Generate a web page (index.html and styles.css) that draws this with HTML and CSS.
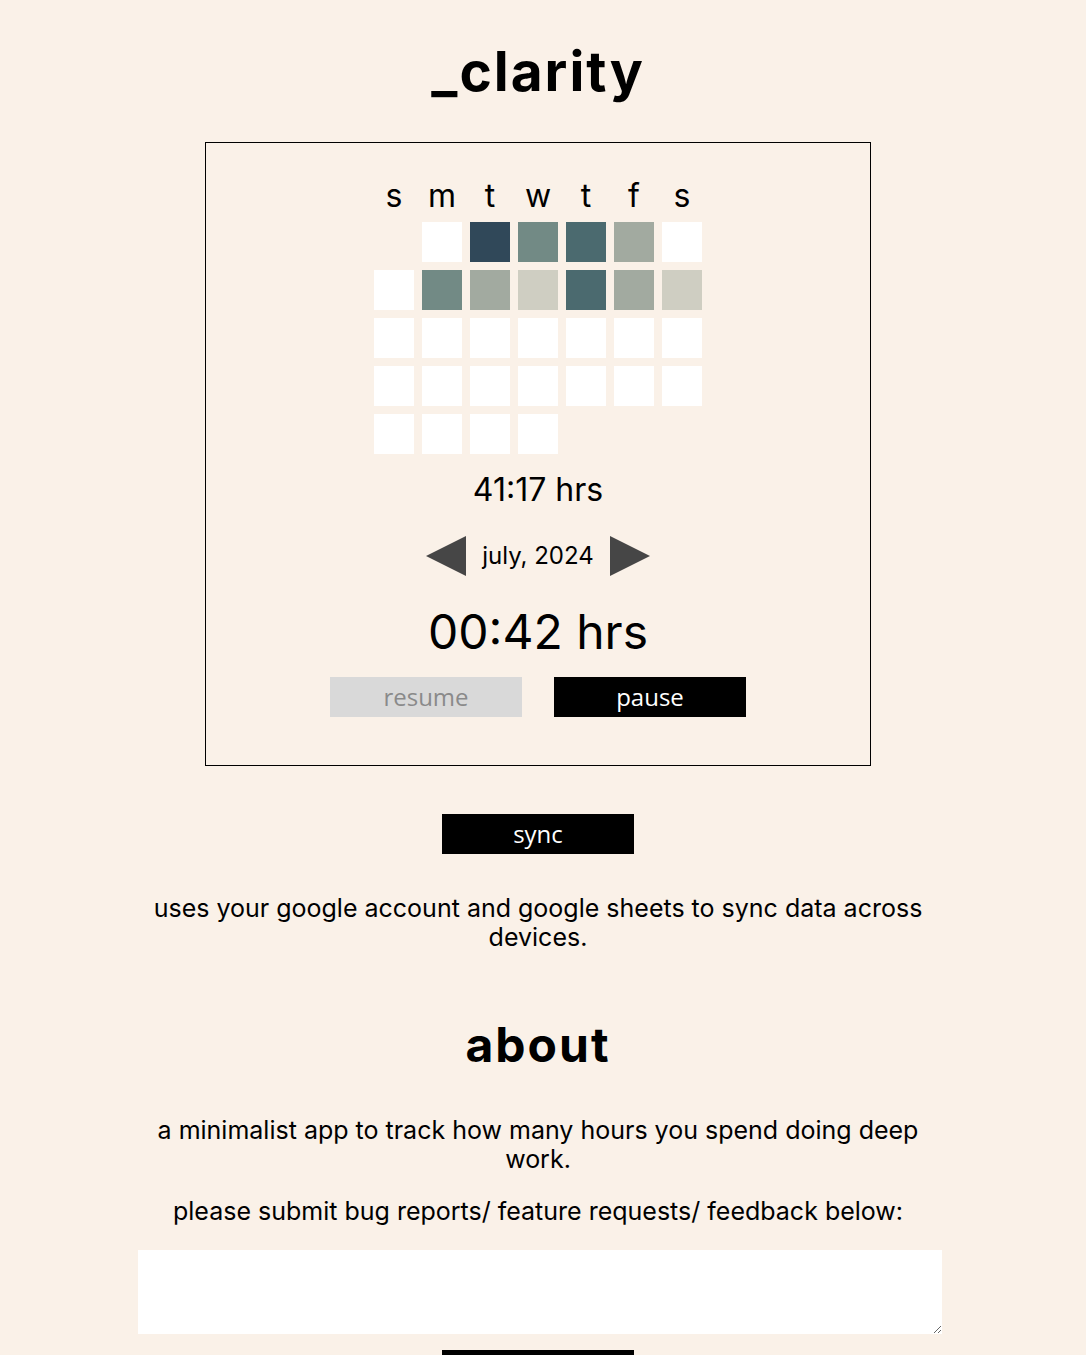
FILE: index.html
```html
<!DOCTYPE html>
<html lang="en">
<head>
<meta charset="utf-8">
<title>_clarity</title>
<link rel="stylesheet" href="styles.css">
</head>
<body>
<main class="page">
  <h1 class="title">_clarity</h1>

  <section class="card">
    <div class="week">
      <span>s</span><span>m</span><span>t</span><span>w</span><span>t</span><span>f</span><span>s</span>
    </div>
    <div class="grid">
      <span class="cell empty"></span>
      <span class="cell"></span>
      <span class="cell c1"></span>
      <span class="cell c3"></span>
      <span class="cell c2"></span>
      <span class="cell c4"></span>
      <span class="cell"></span>

      <span class="cell"></span>
      <span class="cell c3"></span>
      <span class="cell c4"></span>
      <span class="cell c5"></span>
      <span class="cell c2"></span>
      <span class="cell c4"></span>
      <span class="cell c5"></span>

      <span class="cell"></span><span class="cell"></span><span class="cell"></span><span class="cell"></span><span class="cell"></span><span class="cell"></span><span class="cell"></span>
      <span class="cell"></span><span class="cell"></span><span class="cell"></span><span class="cell"></span><span class="cell"></span><span class="cell"></span><span class="cell"></span>
      <span class="cell"></span><span class="cell"></span><span class="cell"></span><span class="cell"></span>
    </div>

    <div class="total">41:17 hrs</div>

    <div class="nav">
      <button class="arrow" aria-label="previous month">
        <svg width="40" height="40" viewBox="0 0 40 40"><polygon points="0,20 40,0 40,40" fill="#464646"/></svg>
      </button>
      <span class="month">july, 2024</span>
      <button class="arrow" aria-label="next month">
        <svg width="40" height="40" viewBox="0 0 40 40"><polygon points="0,0 40,20 0,40" fill="#464646"/></svg>
      </button>
    </div>

    <div class="timer">00:42 hrs</div>

    <div class="controls">
      <button class="btn btn-disabled">resume</button>
      <button class="btn">pause</button>
    </div>
  </section>

  <button class="btn sync">sync</button>

  <p class="text sync-note">uses your google account and google sheets to sync data across devices.</p>

  <h2 class="heading">about</h2>

  <p class="text about-text">a minimalist app to track how many hours you spend doing deep work.</p>
  <p class="text feedback-label">please submit bug reports/ feature requests/ feedback below:</p>

  <textarea class="feedback"></textarea>

  <button class="btn submit">submit</button>
</main>
</body>
</html>
```

FILE: styles.css
```css
html, body {
  margin: 0;
  padding: 0;
}

body {
  background: #faf1e8;
  color: #000;
  font-family: Inter, "Open Sans", sans-serif;
  padding-right: 10px;
}

.page {
  display: flex;
  flex-direction: column;
  align-items: center;
}

.title {
  margin: 38px 0 0;
  font-size: 55px;
  line-height: 66px;
  font-weight: 700;
  letter-spacing: 2px;
}

.card {
  margin-top: 38px;
  width: 664px;
  border: 1px solid #000;
  padding: 33px 0 48px;
  display: flex;
  flex-direction: column;
  align-items: center;
}

.week {
  display: grid;
  grid-template-columns: repeat(7, 40px);
  column-gap: 8px;
  height: 40px;
  margin-bottom: 6px;
  font-size: 32px;
  line-height: 40px;
  text-align: center;
}

.grid {
  display: grid;
  grid-template-columns: repeat(7, 40px);
  grid-auto-rows: 40px;
  gap: 8px;
}

.cell {
  background: #fff;
}

.cell.empty { background: transparent; }
.cell.c1 { background: #304859; }
.cell.c2 { background: #4b6a6f; }
.cell.c3 { background: #728a85; }
.cell.c4 { background: #a2aaa0; }
.cell.c5 { background: #cfcec2; }

.total {
  margin-top: 16px;
  font-size: 32px;
  line-height: 40px;
}

.nav {
  margin-top: 26px;
  display: flex;
  align-items: center;
  height: 40px;
}

.arrow {
  width: 40px;
  height: 40px;
  padding: 0;
  border: 0;
  background: none;
  display: block;
}

.arrow svg { display: block; }

.month {
  width: 144px;
  text-align: center;
  font-size: 24px;
  line-height: 40px;
}

.timer {
  margin-top: 26px;
  font-size: 48px;
  line-height: 60px;
}

.controls {
  margin-top: 15px;
  display: flex;
  gap: 32px;
}

.btn {
  width: 192px;
  height: 40px;
  border: 0;
  padding: 0;
  background: #000;
  color: #fff;
  font-family: "Open Sans", sans-serif;
  font-size: 24px;
  line-height: 40px;
}

.btn-disabled {
  background: #d9d9d9;
  color: #8a8a8a;
}

.sync {
  margin-top: 48px;
}

.text {
  width: 800px;
  margin: 0;
  text-align: center;
  font-size: 25px;
  line-height: 29px;
}

.sync-note {
  margin-top: 40px;
}

.heading {
  margin: 63px 0 0;
  font-size: 48px;
  line-height: 60px;
  font-weight: 700;
  letter-spacing: 2px;
}

.about-text {
  margin-top: 41px;
}

.feedback-label {
  margin-top: 23px;
}

.feedback {
  margin: 24px 0 0 4px;
  width: 804px;
  height: 84px;
  box-sizing: border-box;
  border: 0;
  background: #fff;
  display: block;
  font-family: Inter, sans-serif;
}

.submit {
  margin-top: 16px;
}
```
